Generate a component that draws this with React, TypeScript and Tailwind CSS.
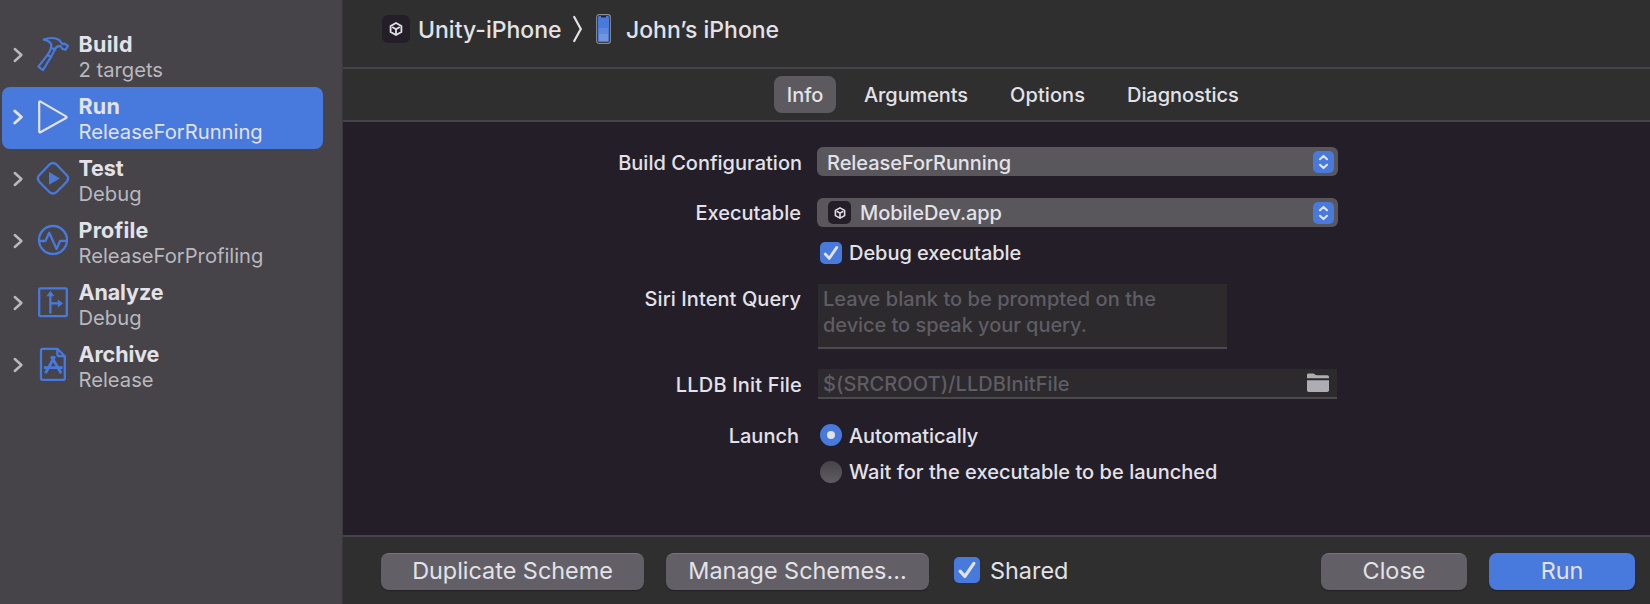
import type { ReactNode } from "react";

const BLUE = "#4879dd";

function HammerIcon() {
  return (
    <svg width="36" height="38" viewBox="0 0 36 38" fill="none" stroke={BLUE} strokeWidth="2.2" strokeLinejoin="round" strokeLinecap="round">
      <path d="M8.8 3.6 C13 1.6 20 1.2 24.2 4 L27.6 8.2 L29.6 7.6 L33 10 L30.4 13.8 L27 12.6 L26 10.4 C23.6 9.8 21 10.6 19.8 13.6 L16 11.8 C17.4 7.6 14.6 4.4 8.8 3.6 Z" />
      <path d="M16 11.8 C15.2 15.6 14.4 17 12 19.6 L3.4 30.6 L8 34 L15.6 21.6 C17.4 18.4 18.4 16.6 19.8 13.6" />
      <path d="M12.6 19 L16.2 21" />
    </svg>
  );
}

function RunIcon() {
  return (
    <svg width="36" height="38" viewBox="0 0 36 38" fill="none" stroke="#e2e2e8" strokeWidth="2.2" strokeLinejoin="round">
      <path d="M4.2 4.2 V33.6 Q4.2 34.8 5.4 34.2 L31 20 Q32.2 19.2 31 18.4 L5.6 3.6 Q4.2 3 4.2 4.2 Z" />
    </svg>
  );
}

function TestIcon() {
  return (
    <svg width="36" height="38" viewBox="0 0 36 38" fill="none" stroke={BLUE} strokeWidth="2.2">
      <path d="M14.6 4.4 Q18 1.6 21.4 4.4 L32 15.4 Q34.4 18.4 32 21.4 L21.4 32.2 Q18 35 14.6 32.2 L4 21.4 Q1.6 18.4 4 15.4 Z" />
      <path d="M14 12 V24.8 L25 18.4 Z" fill={BLUE} stroke="none" />
    </svg>
  );
}

function ProfileIcon() {
  return (
    <svg width="36" height="38" viewBox="0 0 36 38" fill="none" stroke={BLUE} strokeWidth="2.3" strokeLinejoin="round">
      <circle cx="18" cy="18" r="14" />
      <path d="M4 19 H10.4 L14.2 10.8 L21.6 27 L25.2 18.8 H32" />
    </svg>
  );
}

function AnalyzeIcon() {
  return (
    <svg width="36" height="38" viewBox="0 0 36 38" fill="none" stroke={BLUE} strokeWidth="2.3">
      <rect x="4.2" y="4.4" width="27.6" height="27.8" rx="1" />
      <path d="M15.4 29.4 V10.4 M15.4 19.4 H24" />
      <path d="M15.4 6.8 L19.4 12.2 H11.4 Z M28 19.4 L22.8 23.4 V15.4 Z" fill={BLUE} stroke="none" />
    </svg>
  );
}

function ArchiveIcon() {
  return (
    <svg width="36" height="38" viewBox="0 0 36 38" fill="none" stroke={BLUE} strokeWidth="2.3" strokeLinejoin="round">
      <path d="M22.4 2.8 H7.6 Q6 2.8 6 4.4 V32.2 Q6 33.8 7.6 33.8 H28.2 Q29.8 33.8 29.8 32.2 V10.2 Z" />
      <path d="M22.4 2.8 V8.2 Q22.4 10.2 24.4 10.2 H29.8" />
      <path d="M19.8 10.2 L10.4 27.2 M16.2 10.2 L26.2 27.2 M8.8 21.6 H27.6" strokeWidth="2.8" />
    </svg>
  );
}

function CubeIcon({ box, glyph }: { box: string; glyph: number }) {
  return (
    <span className={"flex items-center justify-center bg-[#241e28] " + box}>
      <svg width={glyph} height={glyph} viewBox="0 0 14 14" fill="none" stroke="#e2e2e8" strokeWidth="1.8" strokeLinejoin="round">
        <path d="M7 1 L12.4 4 V10 L7 13 L1.6 10 V4 Z" />
        <path d="M7 13 V7.2 M7 7.2 L3.2 5 M7 7.2 L10.8 5" />
      </svg>
    </span>
  );
}

function Check({ size }: { size: string }) {
  return (
    <span className={"flex shrink-0 items-center justify-center rounded-[5px] bg-[#4879dd] " + size}>
      <svg width="100%" height="100%" viewBox="0 0 22 22" fill="none" stroke="#e2e2e8" strokeWidth="2.8" strokeLinecap="round" strokeLinejoin="round">
        <path d="M5.2 12 L9.2 16.4 L16.8 5.4" />
      </svg>
    </span>
  );
}

function Stepper() {
  return (
    <span className="flex h-[22px] w-[21px] items-center justify-center rounded-[5px] bg-[#4879dd]">
      <svg width="21" height="22" viewBox="0 0 21 22" fill="none" stroke="#e2e2e8" strokeWidth="2.2" strokeLinecap="round" strokeLinejoin="round">
        <path d="M7 8.2 L10.5 5 L14 8.2 M7 13.8 L10.5 17 L14 13.8" />
      </svg>
    </span>
  );
}

const SCHEMES: { title: string; sub: string; icon: ReactNode; active?: boolean; track: string }[] = [
  { title: "Build", sub: "2 targets", icon: <HammerIcon />, track: "tracking-[0.3px]" },
  { title: "Run", sub: "ReleaseForRunning", icon: <RunIcon />, active: true, track: "tracking-[0.2px]" },
  { title: "Test", sub: "Debug", icon: <TestIcon />, track: "tracking-[-0.1px]" },
  { title: "Profile", sub: "ReleaseForProfiling", icon: <ProfileIcon />, track: "tracking-[0.2px]" },
  { title: "Analyze", sub: "Debug", icon: <AnalyzeIcon />, track: "tracking-[-0.1px]" },
  { title: "Archive", sub: "Release", icon: <ArchiveIcon />, track: "tracking-[-0.1px]" },
];

function Row({ label, className, children, labelClass = "" }: { label?: string; className: string; children: ReactNode; labelClass?: string }) {
  return (
    <div className={"flex " + className}>
      <div className={"w-[459px] shrink-0 text-right " + labelClass}>{label}</div>
      {children}
    </div>
  );
}

export default function App() {
  return (
    <div className="flex h-[604px] w-[1650px] overflow-hidden whitespace-nowrap bg-[#2f2f2f] font-['Inter',sans-serif] text-[#e2e2e8]">
      <aside className="w-[343px] shrink-0 border-r border-[#3a383c] bg-[#464448] pl-[2px] pt-[25px]">
        {SCHEMES.map((s) => (
          <div key={s.title} className={"flex h-[62px] w-[321px] items-center rounded-[8px] " + (s.active ? "bg-[#4879dd]" : "")}>
            <svg className="mb-[2px] ml-[10px] shrink-0" width="12" height="20" viewBox="0 0 12 20" fill="none" stroke={s.active ? "#e2e2e8" : "#b9b8bf"} strokeWidth={s.active ? 3 : 2.5} strokeLinecap="round" strokeLinejoin="round">
              <path d="M2.8 4 L9.4 10 L2.8 16" />
            </svg>
            <span className="mb-[2px] ml-[11px] shrink-0">{s.icon}</span>
            <span className="ml-[7.5px] mt-[2px] flex flex-col">
              <span className={"text-[21.5px] font-bold leading-[26px] " + s.track}>{s.title}</span>
              <span className={"text-[20.2px] leading-[26px] " + (s.active ? "text-[#e2e2e8]" : "text-[#b9b8bf]")}>{s.sub}</span>
            </span>
          </div>
        ))}
      </aside>

      <main className="flex min-w-0 flex-1 flex-col text-[20px] font-medium">
        <header className="flex h-[69px] items-center border-b-2 border-[#464448] pb-[9px] pl-[39px] text-[23px]">
          <CubeIcon box="h-[28px] w-[28px] rounded-[6px]" glyph={14} />
          <span className="ml-[8px] w-[143px] pt-[2px]">Unity-iPhone</span>
          <svg className="ml-[11px]" width="12" height="30" viewBox="0 0 12 30" fill="none" stroke="#e2e2e8" strokeWidth="2.2" strokeLinecap="round">
            <path d="M2.2 3 L8.8 15 L2.2 27" />
          </svg>
          <svg className="ml-[12px]" width="15" height="30" viewBox="0 0 15 30">
            <rect x="0.7" y="0.7" width="13.6" height="28.6" rx="2.4" fill="#241e28" stroke="#8d8c92" strokeWidth="1.2" />
            <rect x="2" y="2" width="11" height="26" rx="1.2" fill="#4879dd" />
            <path d="M3 14 H12 V20 H3 Z" fill="#5c88dd" />
            <path d="M3 20 H12 V27 H3 Z" fill="#7097dd" />
            <path d="M5 2 H10 V3.4 H5 Z" fill="#241e28" />
          </svg>
          <span className="ml-[15px] pt-[2px]">John’s iPhone</span>
        </header>

        <nav className="flex h-[53px] items-center border-b-2 border-[#464448] pl-[431px]">
          <span className="flex h-[37px] w-[62px] items-center justify-center rounded-[8px] bg-[#5c5a5f]">Info</span>
          <span className="ml-[28px] w-[105px] tracking-[-0.1px]">Arguments</span>
          <span className="ml-[41px] w-[75px] tracking-[0.1px]">Options</span>
          <span className="ml-[42px] tracking-[-0.05px]">Diagnostics</span>
        </nav>

        <section className="flex-1 bg-[#241e28] pt-[25px]">
          <Row label="Build Configuration" className="h-[29px] items-center" labelClass="pt-[2px]">
            <div className="ml-[15px] flex h-[29px] w-[521px] items-center justify-between rounded-[6px] bg-[#59575c] pl-[10px] pr-[4px]">
              <span className="pt-[2px] tracking-[-0.05px]">ReleaseForRunning</span>
              <Stepper />
            </div>
          </Row>
          <Row label="Executable" className="mt-[22px] h-[29px] items-center" labelClass="pr-[1px]">
            <div className="ml-[15px] flex h-[29px] w-[521px] items-center rounded-[6px] bg-[#59575c] pl-[11px] pr-[4px]">
              <CubeIcon box="h-[23px] w-[23px] rounded-[5px]" glyph={12} />
              <span className="ml-[9px] flex-1 tracking-[-0.1px]">MobileDev.app</span>
              <Stepper />
            </div>
          </Row>
          <Row className="mt-[15px] h-[22px] items-center">
            <div className="ml-[18px] flex items-center gap-[7px]">
              <Check size="h-[22px] w-[22px]" />
              <span className="tracking-[-0.05px]">Debug executable</span>
            </div>
          </Row>
          <Row label="Siri Intent Query" className="mt-[20px] h-[65px] leading-[26px]" labelClass="pt-[2px] pr-[1px] tracking-[0.08px]">
            <div className="ml-[16px] w-[409px] border-b-2 border-[#4c4a4e] bg-[#2c2a2d] pl-[5px] pt-[2px] text-[#5f5d64]">
              <span className="tracking-[0.05px]">Leave blank to be prompted on the</span>
              <br />
              <span className="tracking-[-0.05px]">device to speak your query.</span>
            </div>
          </Row>
          <Row label="LLDB Init File" className="mt-[20px] h-[30px] items-center" labelClass="pt-px tracking-[0.17px]">
            <div className="ml-[16px] flex h-[30px] w-[519px] items-center justify-between border-b-2 border-[#4c4a4e] bg-[#2c2a2d] pl-[5px] pr-[8px] text-[#5f5d64]">
              <span className="pt-[2px] tracking-[0.08px]">$(SRCROOT)/LLDBInitFile</span>
              <svg width="22" height="20" viewBox="0 0 22 20" fill="#aeadb3">
                <path d="M0 5.2 V1.8 Q0 0.4 1.6 0.4 H6 Q7.2 0.4 8 1.4 Q8.8 2.2 10 2.2 H20.2 Q22 2.2 22 3.8 V5.2 Z" />
                <path d="M0 7.2 H22 V17.2 Q22 19 20.2 19 H1.8 Q0 19 0 17.2 Z" />
              </svg>
            </div>
          </Row>
          <Row label="Launch" className="mt-[25px] h-[22px] items-center" labelClass="pr-[3px] pt-px">
            <div className="ml-[18px] flex items-center gap-[7px]">
              <span className="flex size-[22px] items-center justify-center rounded-full bg-[#4879dd]">
                <span className="size-[8px] rounded-full bg-[#e2e2e8]" />
              </span>
              <span className="pt-px tracking-[-0.12px]">Automatically</span>
            </div>
          </Row>
          <Row className="mt-[15px] h-[22px] items-center">
            <div className="ml-[18px] flex items-center gap-[7px]">
              <span className="size-[22px] rounded-full bg-linear-to-b from-[#464448] to-[#5f5d62]" />
              <span className="tracking-[0.03px]">Wait for the executable to be launched</span>
            </div>
          </Row>
        </section>

        <footer className="flex h-[69px] items-center border-t-2 border-[#464448] pl-[38px] pr-[15px] pt-[2px] text-[23.4px] font-normal">
          <button className="h-[37px] w-[263px] rounded-[8px] border-t border-[#77757b] bg-[#626066] pb-[2px] leading-[34px] shadow-[0_1px_1px_#222022]">Duplicate Scheme</button>
          <button className="ml-[22px] h-[37px] w-[263px] rounded-[8px] border-t border-[#77757b] bg-[#626066] pb-[2px] leading-[34px] shadow-[0_1px_1px_#222022]">Manage Schemes...</button>
          <div className="mb-[2px] ml-[25px] flex items-center gap-[10px]">
            <Check size="h-[26px] w-[26px]" />
            <span className="pt-px">Shared</span>
          </div>
          <button className="ml-auto h-[37px] w-[146px] rounded-[8px] border-t border-[#77757b] bg-[#626066] pb-[2px] leading-[34px] shadow-[0_1px_1px_#222022]">Close</button>
          <button className="ml-[22px] h-[37px] w-[146px] rounded-[8px] bg-[#4879dd] pb-[2px] leading-[35px] shadow-[0_1px_1px_#222022]">Run</button>
        </footer>
      </main>
    </div>
  );
}
